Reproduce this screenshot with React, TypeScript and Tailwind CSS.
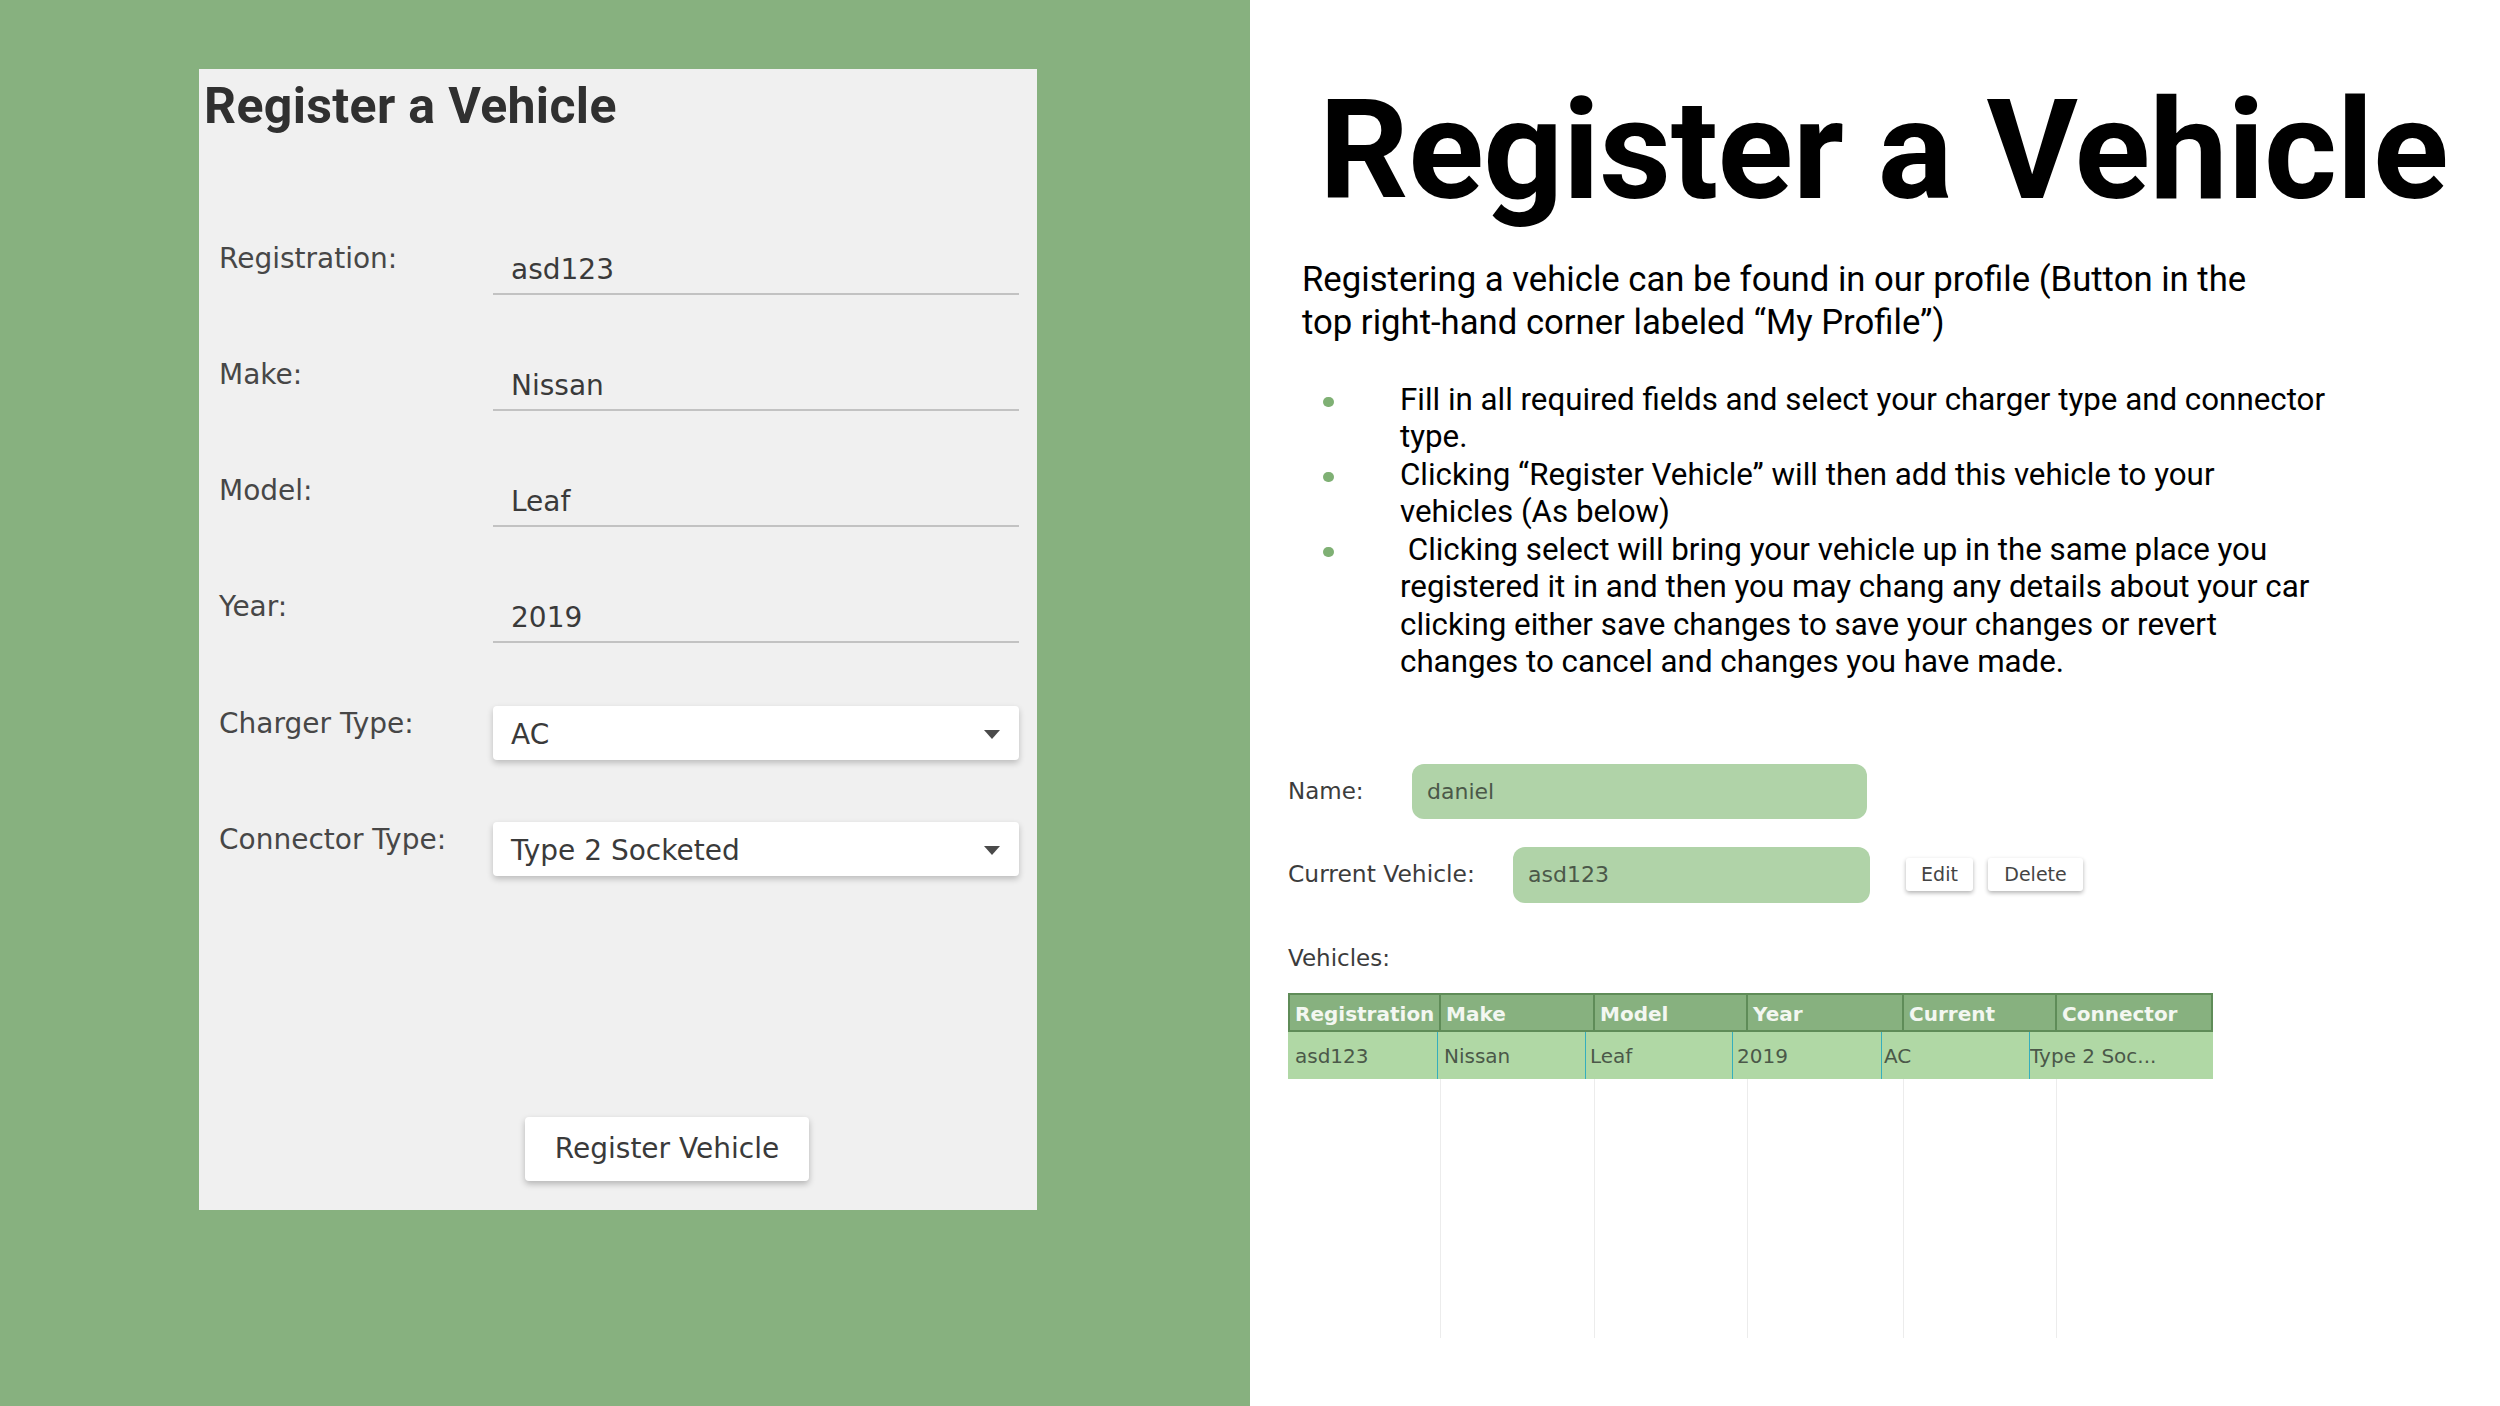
import React from "react";

const DEJAVU = "font-['DejaVu_Sans',sans-serif]";

function TextRow({ label, value, cls }: { label: string; value: string; cls: string }) {
  return (
    <div className={"flex items-start " + cls}>
      <div className="w-[294px] pl-[20px] text-[28px] leading-[32px] text-[#474747]">{label}</div>
      <div className="mt-[11px] w-[526px] border-b-2 border-[#c2c2c2] pl-[18px] pb-[7px] text-[28px] leading-[32px] text-[#3a3a3a]">
        {value}
      </div>
    </div>
  );
}

function SelectRow({ label, value, cls }: { label: string; value: string; cls: string }) {
  return (
    <div className={"flex items-start " + cls}>
      <div className="w-[294px] pl-[20px] pt-[2px] text-[28px] leading-[32px] text-[#474747]">{label}</div>
      <div className="w-[526px] h-[54px] bg-white rounded-[4px] shadow-[0_3px_6px_rgba(0,0,0,0.22)] flex items-center justify-between pl-[18px] pr-[19px] pt-[3px]">
        <span className="text-[28px] leading-[32px] text-[#3a3a3a]">{value}</span>
        <svg width="16" height="9" viewBox="0 0 16 9">
          <path d="M0 0 H16 L8 9 Z" fill="#4a4a4a" />
        </svg>
      </div>
    </div>
  );
}

function LeftPanel() {
  return (
    <div className="w-[1250px] h-full shrink-0 bg-[#87b17f] pl-[199px] pt-[69px]">
      <div className={"w-[838px] h-[1141px] bg-[#f0f0f0] flex flex-col " + DEJAVU}>
        <h1 className="pt-[12px] pl-[5px] text-[50px] leading-[50px] tracking-[0.35px] font-bold text-[#303030] font-['Roboto',sans-serif]">
          Register a Vehicle
        </h1>
        <TextRow label="Registration:" value="asd123" cls="mt-[112px]" />
        <TextRow label="Make:" value="Nissan" cls="mt-[64px]" />
        <TextRow label="Model:" value="Leaf" cls="mt-[64px]" />
        <TextRow label="Year:" value="2019" cls="mt-[64px]" />
        <SelectRow label="Charger Type:" value="AC" cls="mt-[63px]" />
        <SelectRow label="Connector Type:" value="Type 2 Socketed" cls="mt-[62px]" />
        <button className="mt-[241px] ml-[326px] w-[284px] h-[64px] bg-white rounded-[4px] shadow-[0_3px_6px_rgba(0,0,0,0.25)] flex items-center justify-center text-[28px] leading-[32px] text-[#3a3a3a]">
          Register Vehicle
        </button>
      </div>
    </div>
  );
}

const headerCols = [
  { w: "w-[153px] border-l-2", t: "Registration" },
  { w: "w-[154px]", t: "Make" },
  { w: "w-[153px]", t: "Model" },
  { w: "w-[156px]", t: "Year" },
  { w: "w-[153px]", t: "Current" },
  { w: "w-[156px]", t: "Connector" },
];

const rowCells = [
  { w: "w-[149px] pl-[7px]", t: "asd123" },
  { w: "w-[148px] pl-[6px] border-l", t: "Nissan" },
  { w: "w-[147px] pl-[4px] border-l", t: "Leaf" },
  { w: "w-[149px] pl-[4px] border-l", t: "2019" },
  { w: "w-[148px] pl-[2px] border-l", t: "AC" },
  { w: "w-[184px] pl-[0px] border-l", t: "Type 2 Soc..." },
];

const emptyCols = [
  "w-[153px] border-r",
  "w-[154px] border-r",
  "w-[153px] border-r",
  "w-[156px] border-r",
  "w-[153px] border-r",
  "w-[156px]",
];

function Bullet({ lines }: { lines: string[] }) {
  return (
    <li className="flex">
      <div className="w-[112px] shrink-0 pl-[35px] pt-[16px]">
        <div className="w-[11px] h-[10px] rounded-full bg-[#7fb074]" />
      </div>
      <div className="text-[31.3px] leading-[37.43px] text-black whitespace-nowrap">
        {lines.map((l, i) => (
          <div key={i}>{l}</div>
        ))}
      </div>
    </li>
  );
}

function RightPanel() {
  return (
    <div className="flex-1 h-full bg-white flex flex-col pl-[38px] pt-[80px]">
      <h1 className="ml-[31px] text-[140px] leading-[140px] tracking-[-0.5px] font-bold text-black font-['Roboto',sans-serif] whitespace-nowrap">
        Register a Vehicle
      </h1>
      <p className="mt-[38px] ml-[14px] text-[34.7px] leading-[43px] text-black font-['Roboto',sans-serif] whitespace-nowrap">
        Registering a vehicle can be found in our profile (Button in the
        <br />
        top right-hand corner labeled “My Profile”)
      </p>
      <ul className="mt-[37px] font-['Roboto',sans-serif]">
        <Bullet lines={["Fill in all required fields and select your charger type and connector", "type."]} />
        <Bullet lines={["Clicking “Register Vehicle” will then add this vehicle to your", "vehicles (As below)"]} />
        <Bullet
          lines={[
            "\u00A0Clicking select will bring your vehicle up in the same place you",
            "registered it in and then you may chang any details about your car",
            "clicking either save changes to save your changes or revert",
            "changes to cancel and changes you have made.",
          ]}
        />
      </ul>

      <div className={"mt-[83px] flex flex-col " + DEJAVU}>
        <div className="flex items-center h-[55px]">
          <div className="w-[124px] text-[23px] leading-[27px] text-[#3c3c3c]">Name:</div>
          <div className="w-[455px] h-[55px] rounded-[12px] bg-[#b0d3a8] pl-[15px] flex items-center text-[22px] text-[#4b5849]">
            daniel
          </div>
        </div>
        <div className="mt-[28px] flex items-center h-[56px]">
          <div className="w-[225px] text-[23.4px] leading-[27px] text-[#3c3c3c]">Current Vehicle:</div>
          <div className="w-[357px] h-[56px] rounded-[12px] bg-[#b0d3a8] pl-[15px] flex items-center text-[22px] text-[#4b5849]">
            asd123
          </div>
          <button className="ml-[36px] w-[67px] h-[33px] bg-white rounded-[3px] shadow-[0_2px_4px_rgba(0,0,0,0.3)] flex items-center justify-center text-[19px] text-[#444]">
            Edit
          </button>
          <button className="ml-[15px] w-[95px] h-[33px] bg-white rounded-[3px] shadow-[0_2px_4px_rgba(0,0,0,0.3)] flex items-center justify-center text-[19px] text-[#444]">
            Delete
          </button>
        </div>
        <div className="mt-[42px] text-[23px] leading-[27px] text-[#3c3c3c]">Vehicles:</div>
        <div className="mt-[21px] w-[925px] flex flex-col">
          <div className="flex h-[39px] border-y-2 border-[#5f8c58] bg-[#87b17f]">
            {headerCols.map((c, i) => (
              <div
                key={i}
                className={c.w + " border-r-2 border-[#5f8c58] pl-[5px] pt-[3px] text-[20px] leading-[32px] font-bold text-[#f3f7f1] whitespace-nowrap overflow-hidden"}
              >
                {c.t}
              </div>
            ))}
          </div>
          <div className="flex h-[47px] bg-[#b0d8a5]">
            {rowCells.map((c, i) => (
              <div
                key={i}
                className={c.w + " border-[#35aebd] pt-[1px] text-[20px] leading-[46px] text-[#4b5849] whitespace-nowrap overflow-hidden"}
              >
                {c.t}
              </div>
            ))}
          </div>
          <div className="flex h-[259px]">
            {emptyCols.map((c, i) => (
              <div key={i} className={c + " border-[#ececec]"} />
            ))}
          </div>
        </div>
      </div>
    </div>
  );
}

export default function App() {
  return (
    <div className="flex w-[2500px] h-[1406px] overflow-hidden bg-white">
      <LeftPanel />
      <RightPanel />
    </div>
  );
}
